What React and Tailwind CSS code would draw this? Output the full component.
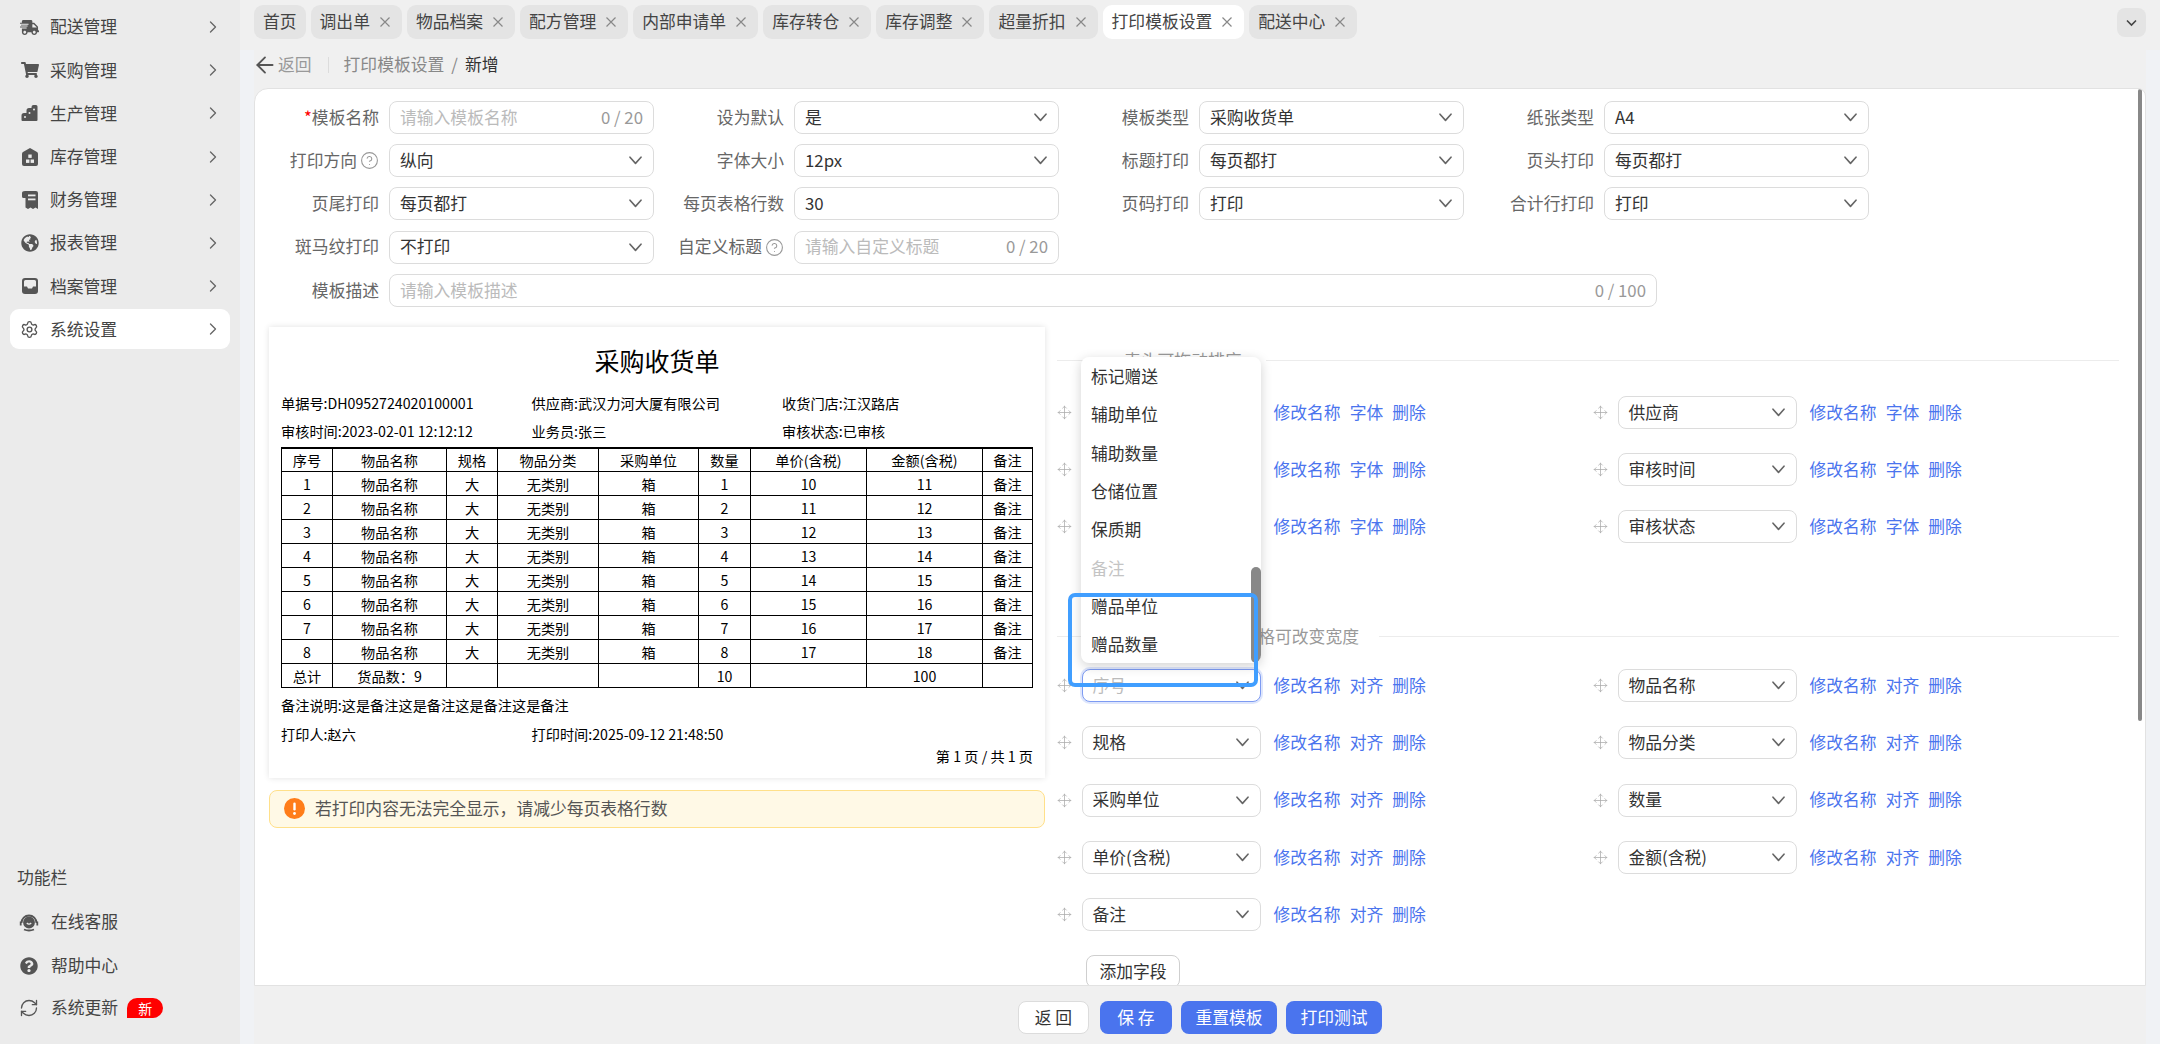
import React from 'react';
import { ChevronRight, ArrowLeft, CircleHelp, Move, RefreshCw, Settings } from 'lucide-react';
import { FaShippingFast, FaShoppingCart, FaGlobeAmericas, FaQuestionCircle } from 'react-icons/fa';

const Chevron = ({ className = '' }) => (
  <svg width="13" height="9" viewBox="0 0 13 9" className={className} fill="none" stroke="#666" strokeWidth="1.6" strokeLinecap="round" strokeLinejoin="round">
    <path d="M1 1.2 L6.5 7.4 L12 1.2" />
  </svg>
);

const CloseIcon = () => (
  <svg width="10" height="10" viewBox="0 0 10 10" className="shrink-0" fill="none" stroke="#888" strokeWidth="1.200">
    <path d="M0.500 0.500 L9.500 9.500 M9.500 0.500 L0.500 9.500" />
  </svg>
);

const FactoryIcon = () => (
  <svg width="18" height="18" viewBox="0 0 18 18" fill="#555">
    <path d="M1.5 17a1 1 0 0 1-1-1v-4.5A2.5 2.5 0 0 1 3 9h2.5V6.5A2.5 2.5 0 0 1 8 4h2.500V3a2 2 0 0 1 2-2H15a1.500 1.500 0 0 1 1.500 1.500V16a1 1 0 0 1-1 1z" />
    <circle cx="4" cy="13" r="1" fill="#ebebeb" />
    <circle cx="8.500" cy="9" r="1" fill="#ebebeb" />
    <circle cx="13" cy="5.500" r="1" fill="#ebebeb" />
  </svg>
);
const WarehouseIcon = () => (
  <svg width="18" height="20" viewBox="0 0 18 20" fill="#555">
    <path d="M9 1 L16 5 Q17 5.600 17 7 V17 Q17 19 15 19 H3 Q1 19 1 17 V7 Q1 5.600 2 5 Z" />
    <rect x="7.300" y="7.500" width="3.400" height="3.400" fill="#ebebeb" />
    <rect x="5" y="12.500" width="3.400" height="3.400" fill="#ebebeb" />
    <rect x="9.600" y="12.500" width="3.400" height="3.400" fill="#ebebeb" />
  </svg>
);
const ReceiptIcon = () => (
  <svg width="16" height="20" viewBox="0 0 16 20" fill="#555">
    <path d="M3 1 H14 Q16 1 16 3 V19 L13.500 17.500 L11 19 L8.500 17.500 L6 19 L3.500 17.500 V8 H1.500 Q0 8 0 6.500 V3 Q0 1 3 1 Z" />
    <rect x="6" y="4.500" width="7.500" height="1.800" fill="#ebebeb" />
    <rect x="6" y="8.500" width="7.500" height="1.800" fill="#ebebeb" />
  </svg>
);
const TrayIcon = () => (
  <svg width="18" height="18" viewBox="0 0 18 18" fill="#555">
    <path d="M4 1 H14 Q17 1 17 4 V14 Q17 17 14 17 H4 Q1 17 1 14 V4 Q1 1 4 1 Z" />
    <path d="M3 9.500 V4.500 Q3 3 4.500 3 H13.500 Q15 3 15 4.500 V9.500 H12 L11 11.500 H7 L6 9.500 Z" fill="#ebebeb" />
  </svg>
);
const ServiceIcon = () => (
  <svg width="20" height="20" viewBox="0 0 20 20" fill="none" stroke="#555" strokeWidth="1.800">
    <path d="M2.500 11 A7.500 7.500 0 0 1 17.500 11" />
    <circle cx="10" cy="10.500" r="5" fill="#555" />
    <path d="M7.800 11 Q10 13.300 12.200 11" stroke="#ebebeb" strokeWidth="1.300" />
    <rect x="0.800" y="9.500" width="1.800" height="4" fill="#555" stroke="none" />
    <rect x="17.400" y="9.500" width="1.800" height="4" fill="#555" stroke="none" />
    <path d="M5 17.500 Q10 19.500 15 17.500" />
  </svg>
);

const menu = [
  ['配送管理', <FaShippingFast size={19} color="#555" />],
  ['采购管理', <FaShoppingCart size={18} color="#555" />],
  ['生产管理', <FactoryIcon />],
  ['库存管理', <WarehouseIcon />],
  ['财务管理', <ReceiptIcon />],
  ['报表管理', <FaGlobeAmericas size={18} color="#555" />],
  ['档案管理', <TrayIcon />],
  ['系统设置', <Settings size={21} color="#555" strokeWidth={1.7} />],
];

const tabs = [
  ['首页', false], ['调出单', true], ['物品档案', true], ['配方管理', true], ['内部申请单', true],
  ['库存转仓', true], ['库存调整', true], ['超量折扣', true], ['打印模板设置', true], ['配送中心', true],
];

const Sel = ({ value }) => (
  <div className="h-[33px] w-full flex items-center justify-between border border-[#dcdcdc] rounded-[8px] bg-white pl-[10px] pr-[11px] text-[16.8px] text-[#333]">
    <span>{value}</span>
    <Chevron />
  </div>
);

const Inp = ({ placeholder, value, count }) => (
  <div className="h-[33px] w-full flex items-center justify-between border border-[#dcdcdc] rounded-[8px] bg-white pl-[10px] pr-[10px] text-[16.8px]">
    {value ? <span className="text-[#333]">{value}</span> : <span className="text-[#bbb]">{placeholder}</span>}
    {count && <span className="text-[#999]">{count}</span>}
  </div>
);

const Help = () => <CircleHelp size={19} color="#999" strokeWidth={1.4} />;

const Cell = ({ label, help, req, children }) => (
  <div className="flex items-center gap-[10px] h-[33px]">
    <div className="w-[123px] flex items-center justify-end gap-[3px] text-[16.8px] text-[#666] whitespace-nowrap">
      {req && <span className="text-[#f00] -mr-[3px]">*</span>}
      <span>{label}</span>
      {help && <Help />}
    </div>
    <div className="w-[265px]">{children}</div>
  </div>
);

const colW = ['w-[51px]', 'w-[114px]', 'w-[51px]', 'w-[101px]', 'w-[100px]', 'w-[52px]', 'w-[116px]', 'w-[116px]', 'w-[50px]'];
const head = ['序号', '物品名称', '规格', '物品分类', '采购单位', '数量', '单价(含税)', '金额(含税)', '备注'];
const rows = [1, 2, 3, 4, 5, 6, 7, 8].map((n) => [String(n), '物品名称', '大', '无类别', '箱', String(n), String(n + 9), String(n + 10), '备注']);

const Td = ({ children }) => <td className="border border-black p-0 h-[24px] text-center leading-[20px] font-normal">{children}</td>;

const Field = ({ name, mid, focus }) => (
  <div className="flex items-center h-[33px]">
    <Move size={15} color="#aaa" strokeWidth={1.2} className="shrink-0 ml-0" />
    <div className="w-[179px] ml-[9.500px] shrink-0">
      {focus ? (
        <div className="h-[33px] w-full flex items-center justify-between border border-[#7d9bf2] rounded-[8px] bg-white pl-[10px] pr-[11px] text-[16.8px] text-[#bbb] shadow-[0_0_0_2px_rgba(74,116,238,0.18)]">
          <span>{name}</span>
          <Chevron />
        </div>
      ) : (
        <Sel value={name} />
      )}
    </div>
    <div className="flex items-center gap-[9px] ml-[13px] text-[16.8px] text-[#4a74ee] whitespace-nowrap">
      <span>修改名称</span>
      <span>{mid}</span>
      <span>删除</span>
    </div>
  </div>
);

const Divider = ({ text, pad }) => (
  <div className="flex items-center h-[24px] text-[16.8px] text-[#999]">
    <div className="w-[47px] h-px bg-[#ececec]" />
    <span className={`${pad} whitespace-nowrap`}>{text}</span>
    <div className="flex-1 h-px bg-[#ececec]" />
  </div>
);

const Btn = ({ children, primary, w }) => (
  <button className={`${w} h-[33px] rounded-[8px] text-[16.8px] flex items-center justify-center ${primary ? 'bg-[#4a74ee] text-white' : 'bg-white border border-[#dcdcdc] text-[#333]'}`}>
    {children}
  </button>
);

export default function App() {
  return (
    <div className="w-[2160px] h-[1044px] flex overflow-hidden bg-[#f0f2f5] font-['Noto_Sans_CJK_SC','Noto_Sans',sans-serif]">
      <aside className="w-[240px] shrink-0 bg-[#ebebeb] flex flex-col pt-[7px] text-[16.8px] text-[#444]">
        {menu.map(([t, icon], i) => (
          <div key={t} className={`mx-[10px] h-[40px] mb-[3.200px] flex items-center pl-[10px] pr-[7px] rounded-[9px] ${i === 7 ? 'bg-white' : ''}`}>
            <span className="w-[19px] flex justify-center shrink-0">{icon}</span>
            <span className="ml-[11px] flex-1">{t}</span>
            <ChevronRight size={20} color="#666" strokeWidth={1.6} />
          </div>
        ))}
        <div className="mt-auto pl-[17px] pb-[24px]">
          <div className="h-[24px] leading-[24px] mb-[21px] text-[#444]">功能栏</div>
          <div className="flex items-center h-[24px] mb-[20px] pl-[2px]">
            <ServiceIcon />
            <span className="ml-[12px]">在线客服</span>
          </div>
          <div className="flex items-center h-[24px] mb-[18px] pl-[3px]">
            <FaQuestionCircle size={18} color="#555" />
            <span className="ml-[13px]">帮助中心</span>
          </div>
          <div className="flex items-center h-[24px] pl-[2px]">
            <RefreshCw size={20} color="#555" strokeWidth={1.6} />
            <span className="ml-[12px]">系统更新</span>
            <span className="ml-[9px] w-[36px] h-[20px] bg-[#f00] text-white text-[14px] leading-[20px] text-center rounded-tl-[10px] rounded-tr-[10px] rounded-br-[10px]">新</span>
          </div>
        </div>
      </aside>

      <main className="flex-1 flex flex-col min-w-0">
        <div className="h-[50px] shrink-0 bg-[#f0f0f0] flex items-start pl-[14px] pr-[14px] pt-[5px] gap-[5px]">
          {tabs.map(([t, c]) => (
            <div key={t} className={`h-[34px] flex items-center gap-[10px] pl-[9px] rounded-[9px] text-[16.8px] text-[#444] ${t === '打印模板设置' ? 'bg-white' : 'bg-[#e4e4e4]'} ${c ? 'pr-[12px]' : 'pr-[9px]'}`}>
              <span className="whitespace-nowrap">{t}</span>
              {c && <CloseIcon />}
            </div>
          ))}
          <div className="ml-auto mt-[3px] w-[29px] h-[29px] rounded-[8px] bg-[#e4e4e4] flex items-center justify-center">
            <svg width="11" height="8" viewBox="0 0 11 8" fill="none" stroke="#444" strokeWidth="1.6"><path d="M1 1.500 L5.500 6 L10 1.500" /></svg>
          </div>
        </div>

        <div className="ml-[14px] mr-[14px] flex-1 flex flex-col bg-[#f0f0f0]">
          <div className="h-[38px] shrink-0 flex items-center text-[16.8px] pb-[8px] pl-[3px]">
            <ArrowLeft size={26} color="#555" strokeWidth={1.7} className="-mx-[5px]" />
            <span className="ml-[5px] text-[#999]">返回</span>
            <div className="w-px h-[16px] bg-[#dcdcdc] ml-[16px] mr-[15px]" />
            <span className="text-[#888]">打印模板设置</span>
            <span className="text-[#888] mx-[7px]">/</span>
            <span className="text-[#333]">新增</span>
          </div>

          <div className="h-[898px] shrink-0 relative overflow-hidden bg-white border border-[#e2e2e2] rounded-tl-[14px] rounded-tr-[8px]">
            <div className="absolute right-[3px] top-0 w-[4px] h-[632px] bg-[#888] rounded-[2px]" />
            <div className="pt-[12px] pl-[1px]">
              <div className="grid grid-cols-[repeat(4,398px)] gap-x-[7px] gap-y-[10.200px]">
                <Cell label="模板名称" req><Inp placeholder="请输入模板名称" count="0 / 20" /></Cell>
                <Cell label="设为默认"><Sel value="是" /></Cell>
                <Cell label="模板类型"><Sel value="采购收货单" /></Cell>
                <Cell label="纸张类型"><Sel value="A4" /></Cell>
                <Cell label="打印方向" help><Sel value="纵向" /></Cell>
                <Cell label="字体大小"><Sel value="12px" /></Cell>
                <Cell label="标题打印"><Sel value="每页都打" /></Cell>
                <Cell label="页头打印"><Sel value="每页都打" /></Cell>
                <Cell label="页尾打印"><Sel value="每页都打" /></Cell>
                <Cell label="每页表格行数"><Inp value="30" /></Cell>
                <Cell label="页码打印"><Sel value="打印" /></Cell>
                <Cell label="合计行打印"><Sel value="打印" /></Cell>
                <Cell label="斑马纹打印"><Sel value="不打印" /></Cell>
                <Cell label="自定义标题" help><Inp placeholder="请输入自定义标题" count="0 / 20" /></Cell>
              </div>
              <div className="flex items-center gap-[10px] h-[33px] mt-[10.200px]">
                <div className="w-[123px] text-right text-[16.8px] text-[#666]">模板描述</div>
                <div className="w-[1268px]"><Inp placeholder="请输入模板描述" count="0 / 100" /></div>
              </div>
            </div>

            <div className="flex items-start pl-[14px] mt-[20px]">
              <div className="w-[776px] shrink-0">
                <div className="h-[451px] bg-white shadow-[0_0_6px_rgba(0,0,0,0.12)] pl-[12px] pr-[12px] pt-[17px] text-black text-[14.200px]">
                  <div className="h-[33px] leading-[33px] text-center text-[25px]">采购收货单</div>
                  <div className="grid grid-cols-[repeat(3,250.500px)] mt-[12px]">
                    {['单据号:DH0952724020100001', '供应商:武汉力河大厦有限公司', '收货门店:江汉路店', '审核时间:2023-02-01 12:12:12', '业务员:张三', '审核状态:已审核'].map((t) => (
                      <div key={t} className="h-[28px] leading-[28px] whitespace-nowrap">{t}</div>
                    ))}
                  </div>
                  <table className="mt-[2px] w-[751px] table-fixed border-collapse border-t-2 border-black">
                    <colgroup>
                      {colW.map((c, i) => <col key={i} className={c} />)}
                    </colgroup>
                    <tbody>
                      <tr>{head.map((h) => <Td key={h}>{h}</Td>)}</tr>
                      {rows.map((r, i) => <tr key={i}>{r.map((c, j) => <Td key={j}>{c}</Td>)}</tr>)}
                      <tr>
                        <Td>总计</Td><Td>货品数：9</Td><Td /><Td /><Td /><Td>10</Td><Td /><Td>100</Td><Td />
                      </tr>
                    </tbody>
                  </table>
                  <div className="h-[20px] leading-[20px] mt-[7px]">备注说明:这是备注这是备注这是备注这是备注</div>
                  <div className="grid grid-cols-[repeat(3,250.500px)] mt-[9px]">
                    <div className="h-[20px] leading-[20px]">打印人:赵六</div>
                    <div className="h-[20px] leading-[20px] whitespace-nowrap">打印时间:2025-09-12 21:48:50</div>
                  </div>
                  <div className="h-[20px] leading-[20px] mt-[2px] text-right">第 1 页 / 共 1 页</div>
                </div>
                <div className="mt-[12px] h-[38px] flex items-center rounded-[8px] border border-[#ffe08a] bg-[#fff9e6] pl-[14px] text-[16.8px] text-[#555]">
                  <svg width="21" height="21" viewBox="0 0 21 21" className="shrink-0">
                    <circle cx="10.500" cy="10.500" r="10.500" fill="#ff7d1a" />
                    <rect x="9.300" y="4.500" width="2.400" height="8" rx="1.200" fill="#fff" />
                    <circle cx="10.500" cy="15.500" r="1.400" fill="#fff" />
                  </svg>
                  <span className="ml-[10px]">若打印内容无法完全显示，请减少每页表格行数</span>
                </div>
              </div>

              <div className="relative ml-[12px] w-[1062px] shrink-0">
                <div className="pt-[22px]">
                  <Divider text="表头可拖动排序" pad="pl-[20px] pr-[25px]" />
                  <div className="grid grid-cols-[536px_1fr] gap-y-[24.200px] mt-[23px]">
                    <Field name="" mid="字体" />
                    <Field name="供应商" mid="字体" />
                    <Field name="" mid="字体" />
                    <Field name="审核时间" mid="字体" />
                    <Field name="" mid="字体" />
                    <Field name="审核状态" mid="字体" />
                  </div>
                  <div className="mt-[81px]"><Divider text="表格明细，拖动表格可改变宽度" pad="px-[20px]" /></div>
                  <div className="grid grid-cols-[536px_1fr] gap-y-[24.200px] mt-[21px]">
                    <Field name="序号" mid="对齐" focus />
                    <Field name="物品名称" mid="对齐" />
                    <Field name="规格" mid="对齐" />
                    <Field name="物品分类" mid="对齐" />
                    <Field name="采购单位" mid="对齐" />
                    <Field name="数量" mid="对齐" />
                    <Field name="单价(含税)" mid="对齐" />
                    <Field name="金额(含税)" mid="对齐" />
                    <Field name="备注" mid="对齐" />
                  </div>
                  <button className="mt-[24px] ml-[29px] w-[94px] h-[33px] rounded-[8px] border border-[#cfcfcf] bg-white text-[16.8px] text-[#333] flex items-center justify-center">添加字段</button>
                </div>

                <div className="absolute left-[24px] top-[30px] w-[180px] h-[306px] overflow-hidden rounded-[8px] bg-white shadow-[0_3px_12px_rgba(0,0,0,0.18)] text-[16.8px] text-[#333]">
                  {['标记赠送', '辅助单位', '辅助数量', '仓储位置', '保质期', '备注', '赠品单位', '赠品数量'].map((t) => (
                    <div key={t} className={`h-[38.400px] leading-[38.400px] pl-[10px] ${t === '备注' ? 'text-[#c4c4c4]' : ''}`}>{t}</div>
                  ))}
                  <div className="absolute right-0 top-[210px] w-[10px] h-[96px] rounded-[5px] bg-[#888]" />
                </div>
                <div className="absolute left-[10.500px] top-[266px] w-[190.500px] h-[94px] border-4 border-[#409eff] rounded-[7px]" />
              </div>
            </div>
          </div>

          <div className="h-[48px] shrink-0 flex items-start justify-center pt-[15px]">
            <Btn w="w-[71px]">返 回</Btn>
            <div className="w-[11px]" />
            <Btn w="w-[72px]" primary>保 存</Btn>
            <div className="w-[9px]" />
            <Btn w="w-[96px]" primary>重置模板</Btn>
            <div className="w-[9px]" />
            <Btn w="w-[96px]" primary>打印测试</Btn>
          </div>
        </div>
      </main>
    </div>
  );
}
